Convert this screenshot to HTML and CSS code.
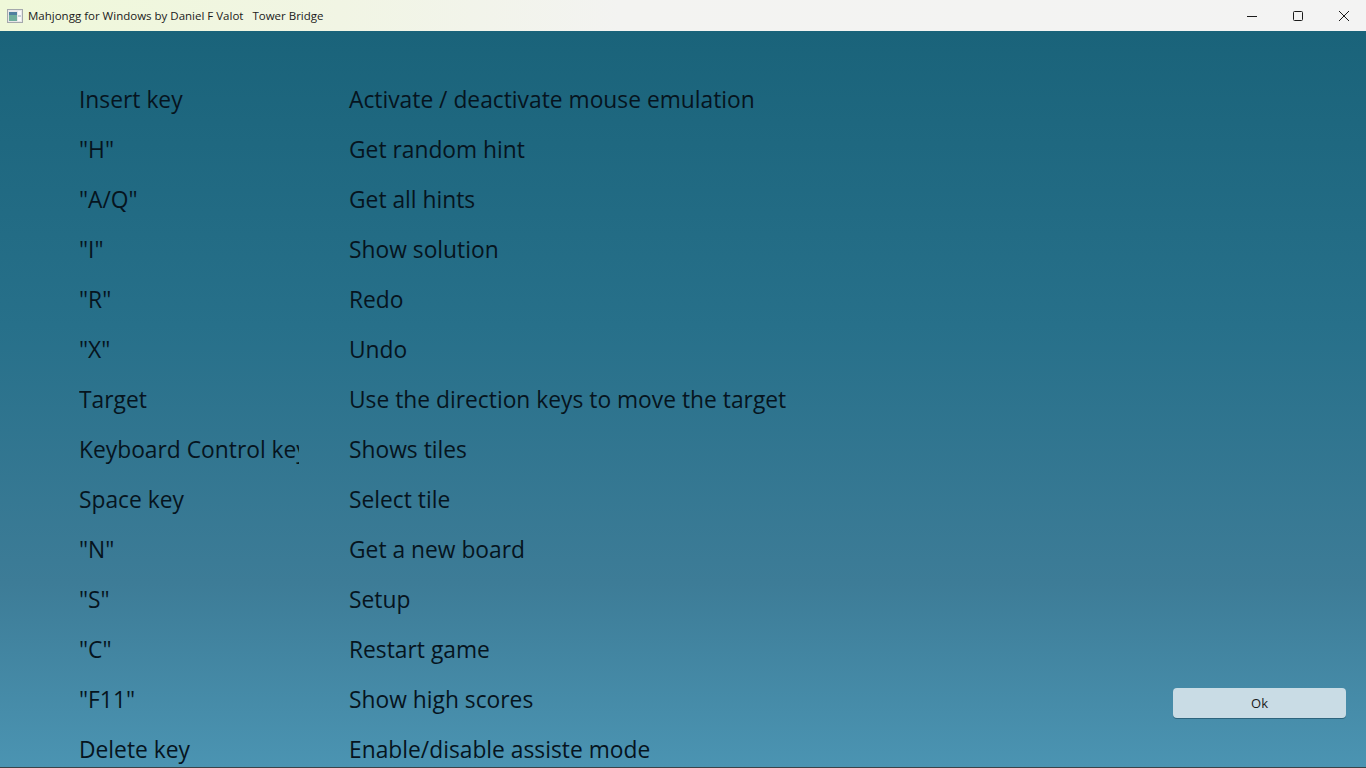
FILE: index.html
```html
<!DOCTYPE html>
<html lang="en">
<head>
<meta charset="UTF-8" />
<meta name="viewport" content="width=device-width, initial-scale=1" />
<title>Mahjongg for Windows by Daniel F Valot</title>
<link rel="stylesheet" href="styles.css">
</head>
<body>

<div class="window">

<div class="titlebar">
<svg class="app-icon" width="16" height="16" viewBox="0 0 16 16">
<rect x="0.5" y="1.5" width="15" height="13" fill="#e8e8e8" stroke="#a4a8ac" />
<rect x="2" y="4" width="8" height="9" fill="#6fae9c" />
<rect x="2" y="4" width="8" height="3" fill="#4f7f9f" />
<rect x="11" y="3" width="3" height="10" fill="#fafafa" />
<rect x="11" y="7" width="3" height="2" fill="#c4d0d6" />
</svg>
<span class="title">Mahjongg for Windows by Daniel F Valot&nbsp;&nbsp; Tower Bridge</span>
<div class="win-buttons">
<div class="win-btn">
<svg width="12" height="12" viewBox="0 0 12 12"><path d="M1 6.5H11" stroke="#1a1a1a" fill="none" /></svg>
</div>
<div class="win-btn">
<svg width="12" height="12" viewBox="0 0 12 12"><rect x="1.5" y="1.5" width="9" height="9" rx="1" stroke="#1a1a1a" fill="none" /></svg>
</div>
<div class="win-btn">
<svg width="12" height="12" viewBox="0 0 12 12"><path d="M1 1L11 11M11 1L1 11" stroke="#1a1a1a" fill="none" /></svg>
</div>
</div>
</div>

<div class="main">
<div class="keys">
<div class="key-row"><div class="key">Insert key</div><div class="action">Activate / deactivate mouse emulation</div></div>
<div class="key-row"><div class="key">"H"</div><div class="action">Get random hint</div></div>
<div class="key-row"><div class="key">"A/Q"</div><div class="action">Get all hints</div></div>
<div class="key-row"><div class="key">"I"</div><div class="action">Show solution</div></div>
<div class="key-row"><div class="key">"R"</div><div class="action">Redo</div></div>
<div class="key-row"><div class="key">"X"</div><div class="action">Undo</div></div>
<div class="key-row"><div class="key">Target</div><div class="action">Use the direction keys to move the target</div></div>
<div class="key-row"><div class="key">Keyboard Control key</div><div class="action">Shows tiles</div></div>
<div class="key-row"><div class="key">Space key</div><div class="action">Select tile</div></div>
<div class="key-row"><div class="key">"N"</div><div class="action">Get a new board</div></div>
<div class="key-row"><div class="key">"S"</div><div class="action">Setup</div></div>
<div class="key-row"><div class="key">"C"</div><div class="action">Restart game</div></div>
<div class="key-row"><div class="key">"F11"</div><div class="action">Show high scores</div></div>
<div class="key-row"><div class="key">Delete key</div><div class="action">Enable/disable assiste mode</div></div>
</div>
<button class="ok-btn">Ok</button>
</div>

</div>

</body>
</html>
```

FILE: styles.css
```css
html, body {
  margin: 0;
  padding: 0;
  height: 100%;
  overflow: hidden;
}
body {
  font-family: "Open Sans", "Noto Sans", sans-serif;
  color: #06141e;
}
.window {
  display: flex;
  flex-direction: column;
  height: 768px;
  border-bottom: 1px solid #3a4448;
  box-sizing: border-box;
}
.titlebar {
  flex: none;
  height: 31px;
  display: flex;
  align-items: center;
  padding-left: 7px;
  background: linear-gradient(90deg, #eff8d9 0, #f1f5e4 340px, #f3f3f1 620px, #f3f3f3 100%);
  color: #1a1a1a;
  font-size: 11.5px;
}
.app-icon {
  margin-right: 5px;
}
.title {
  flex: 1;
  white-space: nowrap;
}
.win-buttons {
  display: flex;
  margin-right: -1px;
}
.win-btn {
  width: 46px;
  height: 31px;
  display: flex;
  align-items: center;
  justify-content: center;
}
.main {
  flex: 1;
  min-height: 0;
  display: flex;
  justify-content: space-between;
  overflow: hidden;
  background: linear-gradient(180deg, #1a637a 0, #27708a 40%, #3d7c97 75%, #4b94b2 100%);
}
.keys {
  padding: 44px 0 0 79px;
}
.key-row {
  display: flex;
  height: 50px;
  align-items: center;
  font-size: 22.8px;
  line-height: 48px;
}
.key {
  width: 220px;
  margin-right: 50px;
  overflow: hidden;
  white-space: nowrap;
}
.ok-btn {
  align-self: flex-end;
  width: 173px;
  height: 30px;
  margin: 0 20px 49px 0;
  border: none;
  border-radius: 4px;
  background: #c9dce5;
  color: #1a1a1a;
  font-family: inherit;
  font-size: 13px;
  box-shadow: 0 1px 0 rgba(20,60,80,0.5);
}
```
